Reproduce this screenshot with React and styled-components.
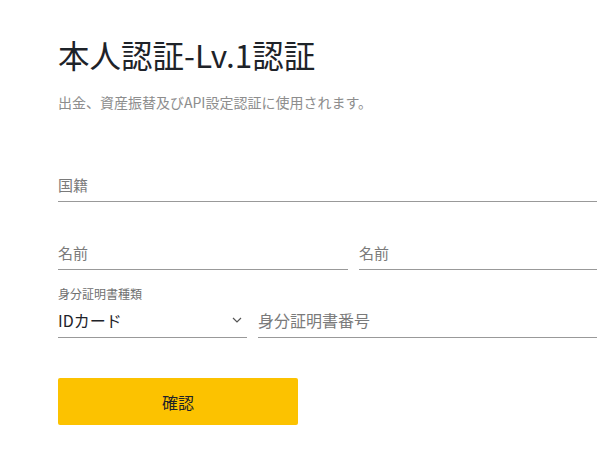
import React from 'react';
import styled, { createGlobalStyle } from 'styled-components';

const GlobalStyle = createGlobalStyle`
    html, body {
        margin: 0;
        padding: 0;
        background: #fff;
        overflow: hidden;
    }
    body {
        font-family: "Noto Sans CJK JP", "Noto Sans", sans-serif;
    }
`;

const Page = styled.div`
    padding: 32px 0 0 58px;
`;

const Title = styled.h1`
    margin: 0;
    font-size: 31.5px;
    line-height: 44px;
    font-weight: 400;
    color: #1e2329;
`;

const Subtitle = styled.p`
    margin: 16px 0 0;
    font-size: 14px;
    line-height: 20px;
    color: #8d8d8d;
`;

const Form = styled.form`
    margin-top: 22px;
    display: flex;
    flex-direction: column;
`;

const Row = styled.div`
    display: grid;
    grid-template-columns: ${p => p.$cols || '1fr'};
    column-gap: 11px;
    height: 68px;
    align-items: end;
`;

const Field = styled.label`
    display: flex;
    flex-direction: column;
    min-width: 0;
`;

const Caption = styled.span`
    font-size: 12px;
    line-height: 14px;
    color: #707070;
    margin-bottom: 2px;
`;

const InputBox = styled.div`
    display: flex;
    align-items: center;
    height: 34px;
    border-bottom: 1px solid #999;
`;

const Input = styled.input`
    flex: 1;
    min-width: 0;
    border: 0;
    outline: none;
    padding: 0;
    background: transparent;
    font-family: inherit;
    font-size: ${p => p.$size || 15}px;
    color: #1e2329;

    &::placeholder {
        color: #7a7a7a;
    }
`;

const SelectValue = styled.span`
    flex: 1;
    font-size: 16px;
    color: #1e2329;
`;

const Chevron = styled.svg`
    width: 12px;
    height: 12px;
    margin-right: 4px;
    color: #555;
`;

const Submit = styled.button`
    margin-top: 40px;
    width: 240px;
    height: 47px;
    border: 0;
    border-radius: 2px;
    background: #fcc200;
    font-family: inherit;
    font-size: 16px;
    color: #1e2329;
    cursor: pointer;
`;

const App = () => (
    <Page>
        <GlobalStyle />
        <Title>本人認証-Lv.1認証</Title>
        <Subtitle>出金、資産振替及びAPI設定認証に使用されます。</Subtitle>
        <Form onSubmit={e => e.preventDefault()}>
            <Row>
                <Field>
                    <InputBox>
                        <Input placeholder="国籍" />
                    </InputBox>
                </Field>
            </Row>
            <Row $cols="290px 1fr">
                <Field>
                    <InputBox>
                        <Input placeholder="名前" />
                    </InputBox>
                </Field>
                <Field>
                    <InputBox>
                        <Input placeholder="名前" />
                    </InputBox>
                </Field>
            </Row>
            <Row $cols="189px 1fr">
                <Field>
                    <Caption>身分証明書種類</Caption>
                    <InputBox>
                        <SelectValue>IDカード</SelectValue>
                        <Chevron viewBox="0 0 12 12" fill="none" stroke="currentColor" strokeWidth="1.2">
                            <path d="M2 4l4 4 4-4" />
                        </Chevron>
                    </InputBox>
                </Field>
                <Field>
                    <InputBox>
                        <Input $size={16} placeholder="身分証明書番号" />
                    </InputBox>
                </Field>
            </Row>
            <Submit type="submit">確認</Submit>
        </Form>
    </Page>
);

export default App;
